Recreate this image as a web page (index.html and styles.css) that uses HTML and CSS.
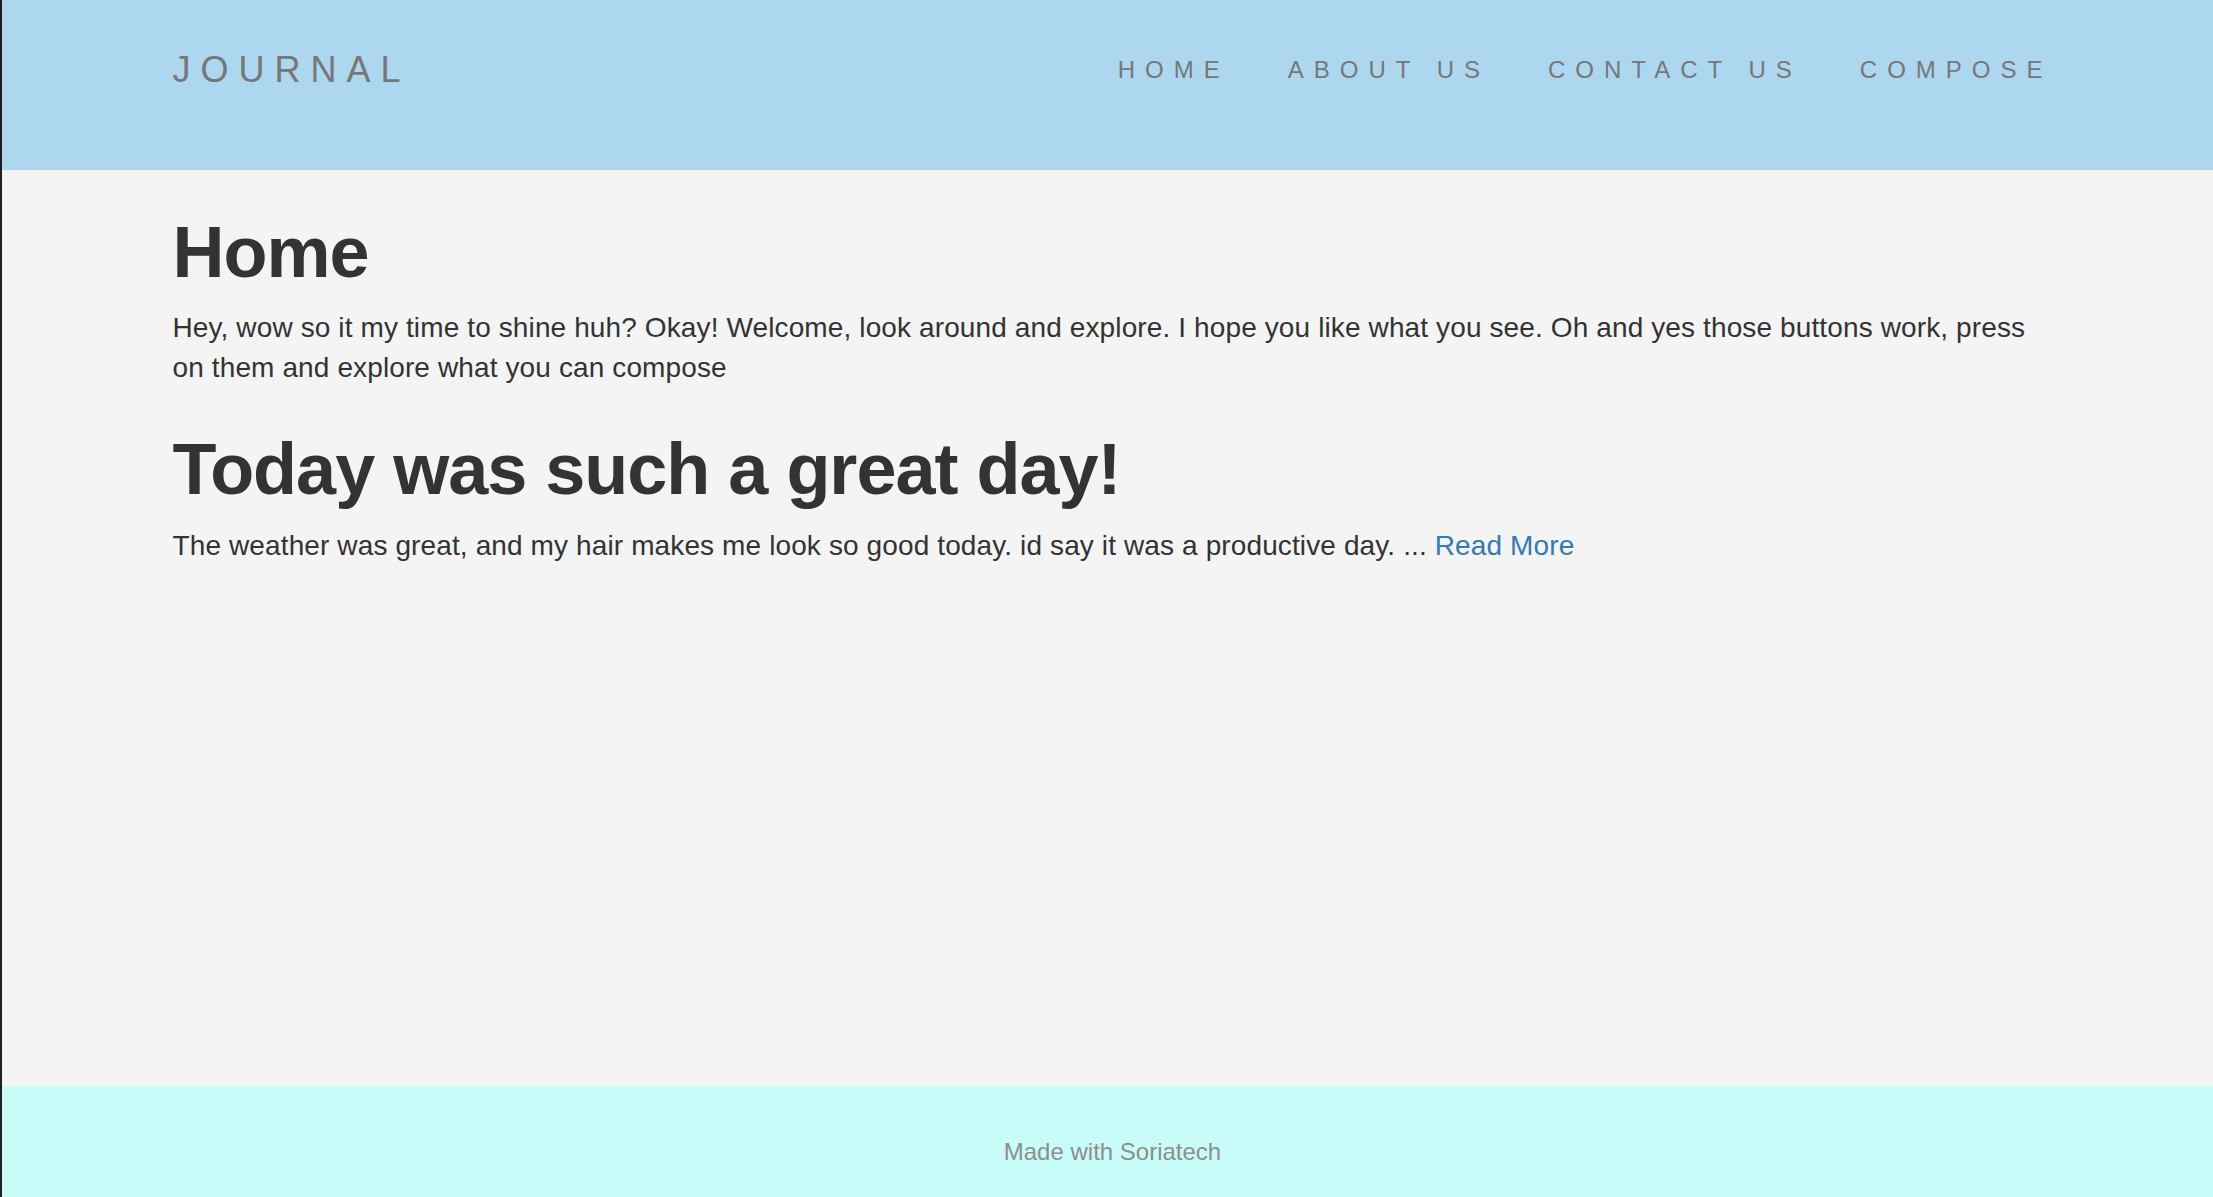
FILE: index.html
```html
<!DOCTYPE html>
<html lang="en">
<head>
<meta charset="utf-8">
<title>Journal</title>
<link rel="stylesheet" href="styles.css">
</head>
<body>
  <header class="site-header">
    <div class="container header-inner">
      <p class="brand">JOURNAL</p>
      <ul class="nav">
        <li><a href="#">HOME</a></li>
        <li><a href="#">ABOUT US</a></li>
        <li><a href="#">CONTACT US</a></li>
        <li><a href="#">COMPOSE</a></li>
      </ul>
    </div>
  </header>
  <main class="main">
    <div class="container">
      <h1 class="page-title">Home</h1>
      <p class="text">Hey, wow so it my time to shine huh? Okay! Welcome, look around and explore. I hope you like what you see. Oh and yes those buttons work, press on them and explore what you can compose</p>
      <h1 class="post-title">Today was such a great day!</h1>
      <p class="text">The weather was great, and my hair makes me look so good today. id say it was a productive day. ... <a class="more" href="#">Read More</a></p>
    </div>
  </main>
  <footer class="footer">
    <p class="footer-text">Made with Soriatech</p>
  </footer>
</body>
</html>
```
FILE: styles.css
```css
html, body {
  margin: 0;
  padding: 0;
}
body {
  min-height: 100vh;
  display: flex;
  flex-direction: column;
  background: #f4f4f4;
  color: #333333;
  font-family: "Liberation Sans", Arial, sans-serif;
  border-left: 2px solid #1f1f22;
  box-sizing: border-box;
}
.container {
  width: 1870px;
  margin: 0 auto;
}
.site-header {
  background: #add6ef;
  height: 170px;
  box-sizing: border-box;
  padding-top: 50px;
}
.header-inner {
  display: flex;
  justify-content: space-between;
  align-items: flex-start;
}
.brand {
  margin: 0;
  font-size: 36px;
  line-height: 40px;
  letter-spacing: 10px;
  color: #777777;
}
.nav {
  list-style: none;
  margin: 0 -39px 0 0;
  padding: 0;
  display: flex;
}
.nav a {
  display: block;
  padding: 0 29px;
  font-size: 24px;
  line-height: 40px;
  letter-spacing: 10px;
  color: #777777;
  text-decoration: none;
}
.main {
  flex: 1;
  padding-top: 42px;
}
.page-title, .post-title {
  font-size: 72px;
  line-height: 80px;
  font-weight: 700;
  letter-spacing: -1px;
  margin: 0 0 16px;
  color: #333333;
}
.post-title {
  margin-top: 41px;
  margin-bottom: 17px;
}
.text {
  max-width: 1858px;
  font-size: 28px;
  line-height: 40px;
  letter-spacing: 0.12px;
  margin: 0 0 20px;
}
.more {
  color: #337ab7;
  text-decoration: none;
}
.footer {
  height: 111px;
  background: #c8fcf9;
  text-align: center;
  box-sizing: border-box;
  padding: 46px 0 0 10px;
}
.footer-text {
  margin: 0;
  font-size: 24px;
  line-height: 40px;
  color: #8e8e8e;
}
```
